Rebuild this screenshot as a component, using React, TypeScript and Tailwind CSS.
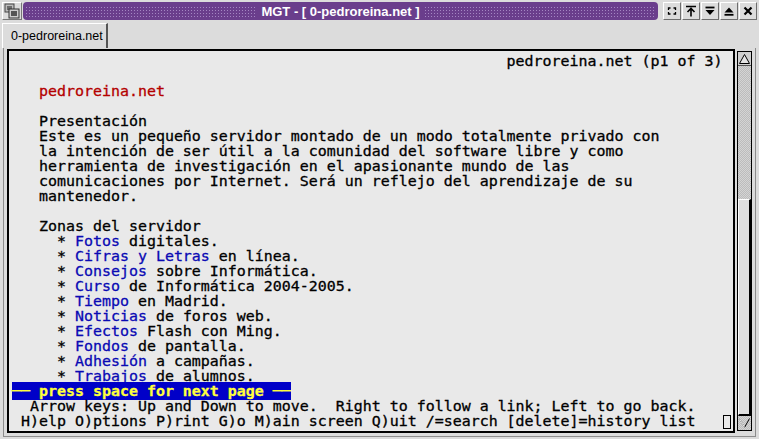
import React from "react";

type Seg = { t: string; c?: "red" | "blue" };

const LINKS: [string, string][] = [
  ["Fotos", " digitales."],
  ["Cifras y Letras", " en línea."],
  ["Consejos", " sobre Informática."],
  ["Curso", " de Informática 2004-2005."],
  ["Tiempo", " en Madrid."],
  ["Noticias", " de foros web."],
  ["Efectos", " Flash con Ming."],
  ["Fondos", " de pantalla."],
  ["Adhesión", " a campañas."],
  ["Trabajos", " de alumnos."],
];

const ROWS: Seg[][] = [
  [{ t: " ".repeat(55) + "pedroreina.net (p1 of 3)" }],
  [],
  [{ t: "   " }, { t: "pedroreina.net", c: "red" }],
  [],
  [{ t: "   Presentación" }],
  [{ t: "   Este es un pequeño servidor montado de un modo totalmente privado con" }],
  [{ t: "   la intención de ser útil a la comunidad del software libre y como" }],
  [{ t: "   herramienta de investigación en el apasionante mundo de las" }],
  [{ t: "   comunicaciones por Internet. Será un reflejo del aprendizaje de su" }],
  [{ t: "   mantenedor." }],
  [],
  [{ t: "   Zonas del servidor" }],
  ...LINKS.map(([link, rest]) => [{ t: "     * " }, { t: link, c: "blue" as const }, { t: rest }]),
];

function TitleButton({ children }: { children: React.ReactNode }) {
  return (
    <div className="flex h-[18px] w-[18px] items-center justify-center border border-t-white border-l-white border-r-[#6e6e6e] border-b-[#6e6e6e] bg-[#dcdcdc]">
      <svg width="12" height="12" viewBox="0 0 12 12" fill="none" stroke="black">
        {children}
      </svg>
    </div>
  );
}

const DOTS = "h-[11px] flex-1 bg-[radial-gradient(circle,#a486c2_0.8px,transparent_0.9px)] bg-[length:3px_3px]";
const STIPPLE = "bg-[repeating-conic-gradient(#bcbcbc_0_25%,#d4d4d4_0_50%)] bg-[length:2px_2px]";

export default function App() {
  return (
    <div className="flex h-[439px] w-[759px] flex-col overflow-hidden bg-[#dcdcdc] font-['Liberation_Sans',sans-serif]">
      {/* title bar */}
      <div className="flex h-[22px] items-center gap-[1px] px-[2px]">
        <div className="flex h-[18px] w-[20px] items-center justify-center border border-t-white border-l-white border-r-[#777] border-b-[#777]">
          <svg width="16" height="16" viewBox="0 0 16 16">
            <rect x="1" y="1" width="9" height="8" fill="#bdbdbd" stroke="#444" />
            <rect x="3" y="3" width="5" height="4" fill="#6d6d6d" />
            <rect x="5" y="6" width="10" height="9" fill="#cfcfcf" stroke="#333" />
            <rect x="7" y="8" width="6" height="5" fill="#555" />
          </svg>
        </div>
        <div className="flex h-[18px] flex-1 items-center rounded-[4px] bg-[#6a3e8c] px-[2px]">
          <div className={DOTS} />
          <span className="px-[4px] text-[13px] leading-none font-bold text-white">MGT - [ 0-pedroreina.net ]</span>
          <div className={DOTS} />
        </div>
        <div className="ml-[4px] flex gap-[1px]">
          <TitleButton>
            <path d="M2.5 5V3h2 M7.5 3h2v2 M9.5 7v2h-2 M4.5 9h-2V7" strokeWidth="1.3" />
          </TitleButton>
          <TitleButton>
            <path d="M1 1.5h10 M6 3.5v8 M2.5 7L6 3.5 9.5 7" strokeWidth="1.6" />
          </TitleButton>
          <TitleButton>
            <path d="M1.5 2.5h9" strokeWidth="1.8" />
            <path d="M1.5 5h9L6 10z" fill="black" stroke="none" />
          </TitleButton>
          <TitleButton>
            <path d="M1.5 7.5h9L6 2.5z" fill="black" stroke="none" />
            <path d="M1.5 9.8h9" strokeWidth="1.8" />
          </TitleButton>
          <TitleButton>
            <path d="M2.5 2.5l7 7M9.5 2.5l-7 7" strokeWidth="2.2" />
          </TitleButton>
        </div>
      </div>

      {/* tab bar */}
      <div className="flex h-[26px] items-end px-[2px]">
        <div className="flex h-[25px] w-[106px] items-center border-t border-l border-t-white border-l-white border-r-2 border-r-[#555] pl-[8px] text-[12.5px] text-black">
          0-pedroreina.net
        </div>
      </div>

      {/* body */}
      <div className="flex flex-1 px-[3px] pb-[2px]">
        <div className="flex flex-1 gap-[2px] border-x border-b border-x-[#8c8c8c] border-b-[#8c8c8c] px-[3px] pt-[1px] pb-[3px]">
          <div className="h-[384px] w-[728px] border-2 border-black bg-[#e9e9e9] pt-[3px] pl-[3px] font-['DejaVu_Sans_Mono',monospace] text-[14.95px] leading-[15px] text-black [-webkit-text-stroke:0.3px]">
            {ROWS.map((row, i) => (
              <div key={i} className="h-[15px] whitespace-pre">
                {row.map((s, j) => (
                  <span key={j} className={s.c === "red" ? "text-[#b40000]" : s.c === "blue" ? "text-[#0a0ab4]" : ""}>
                    {s.t}
                  </span>
                ))}
              </div>
            ))}
            <div className="h-[15px] whitespace-pre">
              <span className="bg-[#0000c8] font-bold text-[#ffff3c]">── press space for next page ──</span>
            </div>
            <div className="h-[15px] whitespace-pre">  Arrow keys: Up and Down to move.  Right to follow a link; Left to go back.</div>
            <div className="flex h-[15px] items-center whitespace-pre">
              <span>{" H)elp O)ptions P)rint G)o M)ain screen Q)uit /=search [delete]=history list".padEnd(79)}</span>
              <span className="ml-[1px] h-[14px] w-[8px] border border-black" />
            </div>
          </div>

          {/* scrollbar */}
          <div className={`mt-[2px] flex h-[380px] w-[15px] flex-col border border-black ${STIPPLE}`}>
            <div className="flex h-[14px] items-center justify-center border-b border-[#555] bg-[#d0d0d0]">
              <svg width="11" height="10" viewBox="0 0 11 10">
                <path d="M0.5 9.5L5.5 0.5 10.5 9.5z" fill="#e4e4e4" stroke="black" />
              </svg>
            </div>
            <div className="flex-1" />
            <div className="h-[217px] border-t border-l border-t-white border-l-white border-r-2 border-b-2 border-r-black border-b-black bg-[#dedede]" />
            <div className="flex h-[14px] items-center justify-center">
              <svg width="11" height="10" viewBox="0 0 11 10">
                <path d="M0.5 0.5L5.5 9.5 10.5 0.5" fill="none" stroke="black" />
                <path d="M0.5 0.5L5.5 9.5" fill="none" stroke="white" />
              </svg>
            </div>
          </div>
        </div>
      </div>
    </div>
  );
}
